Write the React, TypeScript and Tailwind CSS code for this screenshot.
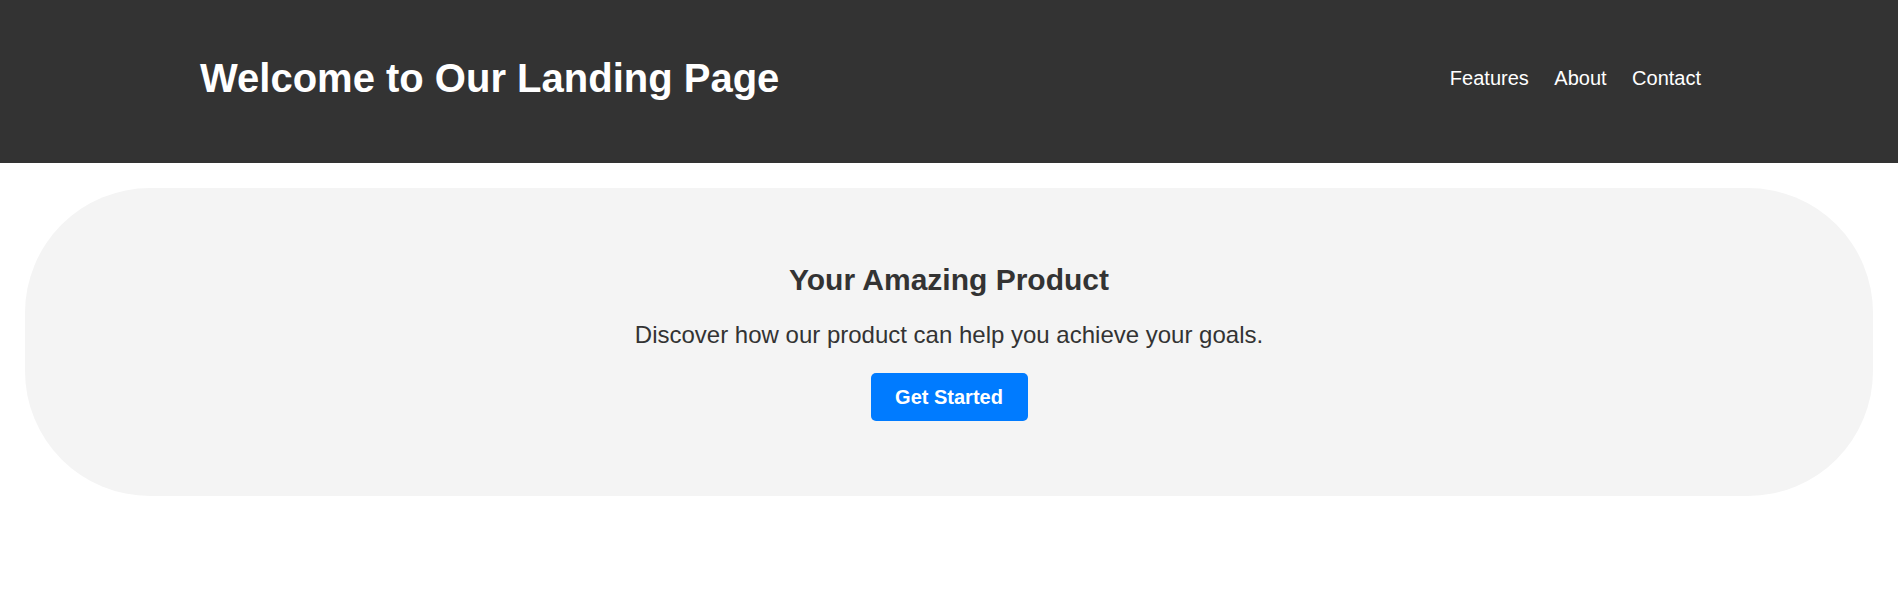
export default function App() {
  return (
    <div className="min-h-[603px] bg-white font-['Liberation_Sans',Arial,sans-serif] text-[#333]">
      <header className="h-[163px] bg-[#333] text-white">
        <div className="flex h-full items-center justify-between pb-[7px] pl-[200px] pr-[197px]">
          <h1 className="text-[40px] font-bold leading-[46px]">Welcome to Our Landing Page</h1>
          <nav>
            <ul className="flex gap-[25.5px] text-[20px] leading-[23px]">
              <li>Features</li>
              <li>About</li>
              <li>Contact</li>
            </ul>
          </nav>
        </div>
      </header>
      <section className="mx-[25px] mt-[25px] flex flex-col items-center rounded-[125px] bg-[#f4f4f4] pb-[75px] pt-[75px] text-center">
        <h2 className="text-[30px] font-bold leading-[34px]">Your Amazing Product</h2>
        <p className="mt-[24px] text-[24px] leading-[28px]">Discover how our product can help you achieve your goals.</p>
        <button className="mt-[24px] h-[48px] w-[157px] rounded-[5px] bg-[#007bff] text-[20px] font-bold leading-[23px] text-white">
          Get Started
        </button>
      </section>
    </div>
  );
}
